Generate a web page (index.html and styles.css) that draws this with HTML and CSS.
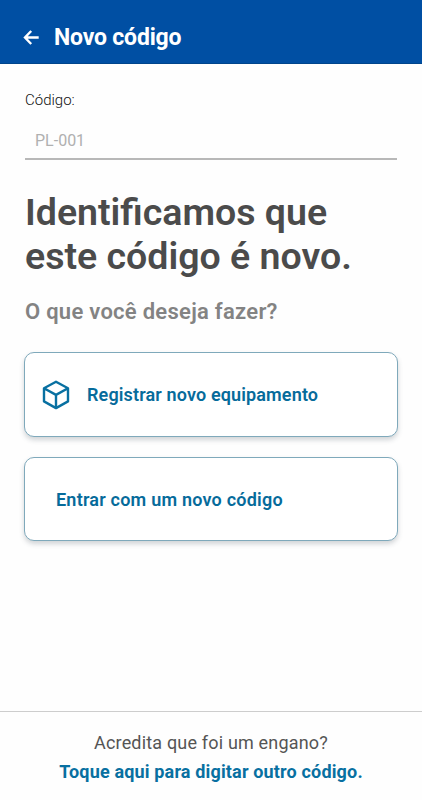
FILE: index.html
```html
<!DOCTYPE html>
<html lang="pt-BR">
<head>
<meta charset="utf-8">
<meta name="viewport" content="width=device-width, initial-scale=1">
<title>Novo código</title>
<link rel="stylesheet" href="styles.css">
</head>
<body>
<header class="app-bar">
  <svg class="back-icon" viewBox="0 0 16 16" aria-hidden="true"><path d="M15.7 7.5H2.3M8.2 1L2 7.5L8.2 14"/></svg>
  <span class="app-title">Novo código</span>
</header>
<main class="content">
  <div class="field-label">Código:</div>
  <div class="field-value">PL-001</div>
  <h1 class="heading">Identificamos que<br>este código é novo.</h1>
  <h2 class="question">O que você deseja fazer?</h2>
  <div class="options">
    <div class="option option-register">
      <svg class="box-icon" viewBox="0 0 28 30" aria-hidden="true"><path d="M14 1.8L26 8.2V21.4L14 28.1L2 21.4V8.2ZM2 8.2L14 14.9L26 8.2M14 14.9V28.1"/></svg>
      <span class="option-text">Registrar novo equipamento</span>
    </div>
    <div class="option option-enter"><span class="option-text">Entrar com um novo código</span></div>
  </div>
</main>
<footer class="footer">
  <div class="footer-note"><span>Acredita que foi um engano?</span></div>
  <div class="footer-link"><span>Toque aqui para digitar outro código.</span></div>
</footer>
</body>
</html>
```
FILE: styles.css
```css
* { box-sizing: border-box; }
body {
  margin: 0;
  height: 800px;
  display: flex;
  flex-direction: column;
  background: #fefefe;
  font-family: Roboto, "Liberation Sans", sans-serif;
  white-space: nowrap;
}
.app-bar {
  height: 64px;
  padding: 12px 23px 0;
  display: flex;
  align-items: center;
  background: #004fa3;
  border-bottom: 1px solid #00458b;
  color: #fff;
}
.back-icon {
  width: 16px;
  height: 16px;
  margin-right: 15px;
  fill: none;
  stroke: #fff;
  stroke-width: 2.4;
}
.app-title {
  font-size: 23px;
  font-weight: 700;
  line-height: 28px;
  letter-spacing: -.18px;
}
.content { flex: 1; padding: 27px 25px 0; }
.field-label {
  font-size: 15px;
  font-weight: 300;
  line-height: 18px;
  color: #111;
}
.field-value {
  height: 51px;
  padding: 22px 10px 0;
  border-bottom: 2px solid #b8b8b8;
  font-size: 16px;
  line-height: 19px;
  color: #b0b0b0;
}
.heading {
  margin: 30px 0 0;
  font-size: 37.5px;
  font-weight: 600;
  line-height: 44px;
  color: #4b4b4b;
}
.question {
  margin: 20px 0 0;
  font-size: 22px;
  font-weight: 600;
  line-height: 28px;
  letter-spacing: .27px;
  color: #838383;
}
.options { display: grid; gap: 20px; margin: 26px -1px 0; }
.option {
  height: 85px;
  display: flex;
  align-items: center;
  border: 1px solid #7fa9bb;
  border-radius: 10px;
  background: #fff;
  box-shadow: 0 3px 5px rgba(60, 75, 85, .23);
  color: #066b9b;
  font-size: 18px;
  font-weight: 600;
}
.option-register { padding-left: 17px; letter-spacing: .14px; }
.option-enter { height: 84px; padding-left: 31px; letter-spacing: .22px; }
.box-icon {
  width: 28px;
  height: 30px;
  margin-right: 17px;
  fill: none;
  stroke: #0870a1;
  stroke-width: 2.4;
  stroke-linejoin: round;
}
.footer {
  height: 89px;
  padding-top: 16px;
  border-top: 1px solid #cdcdcd;
  text-align: center;
  font-size: 18px;
  line-height: 29px;
}
.footer-note { color: #555; letter-spacing: .18px; }
.footer-link { color: #0870a1; font-weight: 700; letter-spacing: .16px; }
```
